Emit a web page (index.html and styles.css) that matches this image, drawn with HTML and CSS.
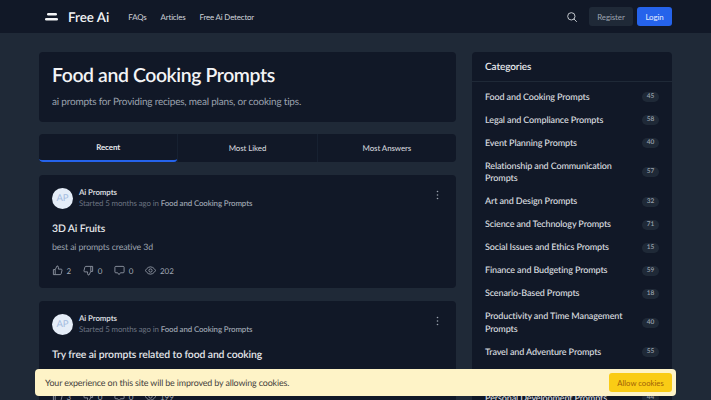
FILE: index.html
```html
<!DOCTYPE html>
<html lang="en">
<head>
<meta charset="utf-8">
<title>Food and Cooking Prompts</title>
<link rel="stylesheet" href="styles.css">
</head>
<body>
<header class="topbar">
  <div class="brand">
    <svg class="logo" width="14" height="8" viewBox="0 0 14 8"><rect x="2" y="0" width="10" height="2.4" rx="1.2" fill="#f3f4f6"/><rect x="0" y="5" width="13" height="2.6" rx="1.3" fill="#f3f4f6"/></svg>
    <span class="brand-name">Free Ai</span>
  </div>
  <nav class="nav"><a>FAQs</a><a>Articles</a><a>Free Ai Detector</a></nav>
  <div class="actions">
    <svg class="search" width="10" height="10" viewBox="0 0 12 12" fill="none" stroke="#d1d5db" stroke-width="1.1"><circle cx="5.2" cy="5.2" r="4.4"/><path d="M8.4 8.4 11.4 11.500" stroke-linecap="round"/></svg>
    <button class="btn btn-dark">Register</button>
    <button class="btn btn-blue">Login</button>
  </div>
</header>
<div class="page">
  <main class="main">
    <section class="hero">
      <h1>Food and Cooking Prompts</h1>
      <p>ai prompts for Providing recipes, meal plans, or cooking tips.</p>
    </section>
    <div class="tabs">
      <div class="tab active">Recent</div>
      <div class="tab">Most Liked</div>
      <div class="tab">Most Answers</div>
    </div>
    <article class="post">
      <div class="post-head">
        <div class="avatar">AP</div>
        <div class="meta">
          <div class="author">Ai Prompts</div>
          <div class="started">Started 5 months ago in <b>Food and Cooking Prompts</b></div>
        </div>
        <svg class="dots" width="3" height="10" viewBox="0 0 3 10" fill="#9ca3af"><circle cx="1.5" cy="1.5" r="0.8"/><circle cx="1.5" cy="5" r="0.8"/><circle cx="1.5" cy="8.5" r="0.8"/></svg>
      </div>
      <h2>3D Ai Fruits</h2>
      <p class="excerpt">best ai prompts creative 3d</p>
      <div class="stats">
        <span class="stat"><svg width="11" height="11" viewBox="0 0 24 24" fill="none" stroke="#9ca3af" stroke-width="1.8" stroke-linejoin="round"><path d="M7 10v11H3V10zM7 10l4-8c2 0 3 1 3 3v4h6c1.300 0 2 1 2 2l-2 8c-.3 1-1 2-2 2H7"/></svg>2</span>
        <span class="stat"><svg width="11" height="11" viewBox="0 0 24 24" fill="none" stroke="#9ca3af" stroke-width="1.8" stroke-linejoin="round"><path d="M17 14V3h4v11zM17 14l-4 8c-2 0-3-1-3-3v-4H4c-1.300 0-2-1-2-2l2-8c.3-1 1-2 2-2h11"/></svg>0</span>
        <span class="stat"><svg width="11" height="11" viewBox="0 0 24 24" fill="none" stroke="#9ca3af" stroke-width="1.8" stroke-linejoin="round"><path d="M4 3h16a2 2 0 0 1 2 2v10a2 2 0 0 1-2 2h-6l-3 4-3-4H4a2 2 0 0 1-2-2V5a2 2 0 0 1 2-2z"/></svg>0</span>
        <span class="stat"><svg width="11" height="11" viewBox="0 0 24 24" fill="none" stroke="#9ca3af" stroke-width="1.8"><path d="M1 12s4-8 11-8 11 8 11 8-4 8-11 8S1 12 1 12z"/><circle cx="12" cy="12" r="3.500"/></svg>202</span>
      </div>
    </article>
    <article class="post">
      <div class="post-head">
        <div class="avatar">AP</div>
        <div class="meta">
          <div class="author">Ai Prompts</div>
          <div class="started">Started 5 months ago in <b>Food and Cooking Prompts</b></div>
        </div>
        <svg class="dots" width="3" height="10" viewBox="0 0 3 10" fill="#9ca3af"><circle cx="1.5" cy="1.5" r="0.8"/><circle cx="1.5" cy="5" r="0.8"/><circle cx="1.5" cy="8.5" r="0.8"/></svg>
      </div>
      <h2>Try free ai prompts related to food and cooking</h2>
      <p class="excerpt">best ai prompts for food</p>
      <div class="stats">
        <span class="stat"><svg width="11" height="11" viewBox="0 0 24 24" fill="none" stroke="#9ca3af" stroke-width="1.8" stroke-linejoin="round"><path d="M7 10v11H3V10zM7 10l4-8c2 0 3 1 3 3v4h6c1.300 0 2 1 2 2l-2 8c-.3 1-1 2-2 2H7"/></svg>3</span>
        <span class="stat"><svg width="11" height="11" viewBox="0 0 24 24" fill="none" stroke="#9ca3af" stroke-width="1.8" stroke-linejoin="round"><path d="M17 14V3h4v11zM17 14l-4 8c-2 0-3-1-3-3v-4H4c-1.300 0-2-1-2-2l2-8c.3-1 1-2 2-2h11"/></svg>0</span>
        <span class="stat"><svg width="11" height="11" viewBox="0 0 24 24" fill="none" stroke="#9ca3af" stroke-width="1.8" stroke-linejoin="round"><path d="M4 3h16a2 2 0 0 1 2 2v10a2 2 0 0 1-2 2h-6l-3 4-3-4H4a2 2 0 0 1-2-2V5a2 2 0 0 1 2-2z"/></svg>0</span>
        <span class="stat"><svg width="11" height="11" viewBox="0 0 24 24" fill="none" stroke="#9ca3af" stroke-width="1.8"><path d="M1 12s4-8 11-8 11 8 11 8-4 8-11 8S1 12 1 12z"/><circle cx="12" cy="12" r="3.500"/></svg>199</span>
      </div>
    </article>
  </main>
  <aside class="side">
    <h3>Categories</h3>
    <ul class="cats">
      <li><span>Food and Cooking Prompts</span><em>45</em></li>
      <li><span>Legal and Compliance Prompts</span><em>58</em></li>
      <li><span>Event Planning Prompts</span><em>40</em></li>
      <li><span>Relationship and Communication Prompts</span><em>57</em></li>
      <li><span>Art and Design Prompts</span><em>32</em></li>
      <li><span>Science and Technology Prompts</span><em>71</em></li>
      <li><span>Social Issues and Ethics Prompts</span><em>15</em></li>
      <li><span>Finance and Budgeting Prompts</span><em>59</em></li>
      <li><span>Scenario-Based Prompts</span><em>18</em></li>
      <li><span>Productivity and Time Management Prompts</span><em>40</em></li>
      <li><span>Travel and Adventure Prompts</span><em>55</em></li>
      <li><span>Health and Fitness Prompts</span><em>48</em></li>
      <li><span>Personal Development Prompts</span><em>44</em></li>
    </ul>
  </aside>
</div>
<div class="cookie">
  <span>Your experience on this site will be improved by allowing cookies.</span>
  <button class="allow">Allow cookies</button>
</div>
</body>
</html>
```
FILE: styles.css
```css
* { box-sizing: border-box; }
html, body { margin: 0; height: 400px; overflow: hidden; }
body { background: #1f2937; font-family: "Lato", "Noto Sans", sans-serif; color: #e5e7eb; text-rendering: geometricPrecision; }
.topbar { height: 33px; background: #111827; display: flex; align-items: center; padding: 0 39px 0 45px; }
.brand { display: flex; align-items: center; gap: 9px; }
.logo { display: block; }
.brand-name { font-size: 13.4px; font-weight: 600; color: #f3f4f6; }
.nav { display: flex; gap: 14px; margin-left: 19px; font-size: 7.9px; letter-spacing: -0.02em; color: #d1d5db; }
.actions { margin-left: auto; display: flex; align-items: center; gap: 4px; }
.search { margin-right: 8px; }
.btn { border: 0; border-radius: 3px; height: 19px; font: inherit; font-size: 7.9px; letter-spacing: -0.01em; padding: 0; }
.btn-dark { width: 44px; background: #1f2937; color: #9ca3af; }
.btn-blue { width: 35px; background: #2563eb; color: #e5edff; }
.page { display: flex; gap: 16px; padding: 19px 39px 0; align-items: flex-start; }
.main { width: 417px; flex: none; display: flex; flex-direction: column; gap: 13px; }
.hero { height: 70px; background: #111827; border-radius: 4px; padding: 12px 13px 0; margin-bottom: -1px; }
.hero h1 { margin: 0; font-size: 19.4px; font-weight: 600; color: #f3f4f6; line-height: 23px; letter-spacing: -0.02em; }
.hero p { margin: 9px 0 0; font-size: 10px; color: #9ca3af; line-height: 12px; letter-spacing: -0.02em; }
.tabs { display: flex; height: 28px; background: #111827; border-radius: 4px; overflow: hidden; gap: 1px; font-size: 7.9px; letter-spacing: -0.01em; }
.tab { flex: 1; display: flex; align-items: center; justify-content: center; color: #d1d5db; font-weight: 500; }
.tab.active { border-bottom: 2px solid #2563eb; border-radius: 0 0 3px 3px; color: #e5e7eb; font-weight: 700; }
.tab + .tab { box-shadow: -1px 0 0 #172131; }
.post { background: #111827; border-radius: 4px; padding: 12px 13px; height: 113px; flex: none; }
.post-head { display: flex; align-items: center; gap: 6px; }
.avatar { width: 21px; height: 21px; border-radius: 50%; background: #e5edf8; color: #a3bbdf; font-size: 9.5px; display: flex; align-items: center; justify-content: center; }
.meta { flex: 1; }
.author { font-size: 7.9px; font-weight: 700; color: #d1d5db; line-height: 11px; letter-spacing: -0.015em; }
.started { font-size: 7.9px; color: #6b7280; line-height: 11px; letter-spacing: -0.015em; }
.started b { color: #9ca3af; font-weight: 600; }
.dots { margin: -6px 4px 0 0; }
.post h2 { margin: 14px 0 0; font-size: 10.4px; font-weight: 600; color: #e5e7eb; line-height: 13px; letter-spacing: -0.01em; }
.excerpt { margin: 4px 0 0; font-size: 8.8px; color: #9ca3af; line-height: 13px; letter-spacing: -0.015em; }
.stats { display: flex; gap: 12px; margin-top: 12px; font-size: 8px; color: #9ca3af; }
.stat { display: flex; align-items: center; gap: 3.5px; }
.side { width: 200px; flex: none; background: #111827; border-radius: 4px; }
.side h3 { margin: 0; height: 30px; padding: 0 13px; display: flex; align-items: center; font-size: 10px; font-weight: 600; color: #e5e7eb; border-bottom: 1px solid #1f2937; letter-spacing: -0.01em; }
.cats { list-style: none; margin: 0; padding: 3.5px 13px; }
.cats li { display: flex; align-items: center; justify-content: space-between; gap: 12px; padding: 5.25px 0; font-size: 9px; line-height: 12.5px; color: #d1d5db; font-weight: 600; letter-spacing: -0.015em; }
.cats em { flex: none; width: 17px; height: 10px; border-radius: 5px; background: #1f2937; font-style: normal; font-size: 6.5px; line-height: 10px; text-align: center; color: #9ca3af; letter-spacing: 0; }
.cookie { position: fixed; left: 35px; top: 369px; width: 641px; height: 27px; background: #fef3c7; border-radius: 4px; display: flex; align-items: center; justify-content: space-between; padding: 0 4px 0 10px; font-size: 8.9px; letter-spacing: -0.015em; color: #44403c; }
.allow { border: 0; background: #facc15; color: #a16207; border-radius: 3px; height: 19px; width: 63px; font: inherit; font-size: 7.7px; padding: 0; }
```
